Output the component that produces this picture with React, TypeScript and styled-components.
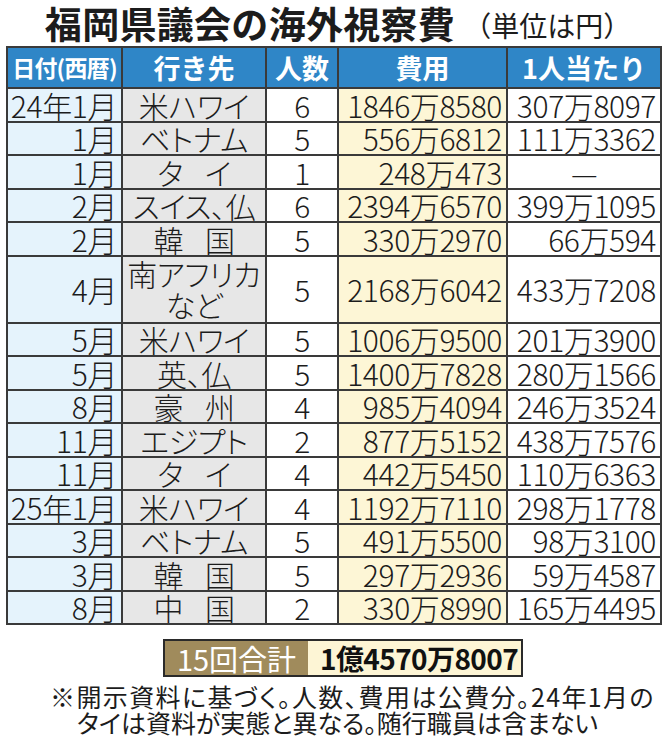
import React from "react";
import styled, { createGlobalStyle } from "styled-components";

const Global = createGlobalStyle`
  html, body { margin: 0; padding: 0; background: #ffffff; }
  body {
    font-family: "Noto Sans CJK JP", "Noto Sans", sans-serif;
    color: #1c1c1c;
  }
`;

const Page = styled.div`
  width: 670px;
  height: 745px;
  overflow: hidden;
  display: flex;
  flex-direction: column;
`;

const TitleRow = styled.div`
  height: 46px;
  display: flex;
  align-items: center;
  justify-content: center;
  gap: 8px;
  padding-left: 6px;
  box-sizing: border-box;
`;

const Title = styled.span`
  font-size: 37px;
  font-weight: 700;
  line-height: 1.15;
  letter-spacing: 0.3px;
  white-space: nowrap;
`;

const Unit = styled.span`
  font-size: 28px;
  font-weight: 400;
  line-height: 1.15;
  margin-top: 5px;
  white-space: nowrap;
`;

const Table = styled.div`
  display: grid;
  grid-template-columns: 113px 142px 70px 167px 152px;
  grid-template-rows: 39px;
  grid-auto-rows: 31.5px;
  gap: 2px;
  background: #3a3a3a;
  border: 2px solid #3a3a3a;
  width: fit-content;
  margin-left: 6px;
`;

const HeadCell = styled.div<{ $narrow?: boolean }>`
  background: #2f86c7;
  color: #ffffff;
  font-weight: 700;
  font-size: ${(p) => (p.$narrow ? "23px" : "27px")};
  letter-spacing: ${(p) => (p.$narrow ? "-0.8px" : "0")};
  display: flex;
  align-items: center;
  justify-content: center;
  line-height: 1;
  white-space: nowrap;
`;

type Align = "left" | "center" | "right";

const Cell = styled.div<{ $bg: string; $align: Align; $tall?: boolean; $gap?: number }>`
  background: ${(p) => p.$bg};
  grid-row: ${(p) => (p.$tall ? "span 2" : "auto")};
  display: flex;
  align-items: center;
  justify-content: ${(p) =>
    p.$align === "right" ? "flex-end" : p.$align === "center" ? "center" : "flex-start"};
  gap: ${(p) => p.$gap ?? 0}px;
  padding: 0 4px;
  font-size: 30px;
  font-weight: 300;
  line-height: 1;
  white-space: nowrap;
  letter-spacing: -0.4px;
  font-feature-settings: "palt";
`;

const TwoLine = styled.div`
  display: flex;
  flex-direction: column;
  align-items: center;
  line-height: 31px;
`;

const TotalBox = styled.div`
  margin-top: 14px;
  margin-left: 163px;
  width: 360px;
  height: 38px;
  box-sizing: border-box;
  border: 2px solid #2a2a2a;
  display: flex;
`;

const TotalLabel = styled.div`
  width: 143px;
  background: #a08b5c;
  color: #ffffff;
  font-size: 29px;
  font-weight: 400;
  display: flex;
  align-items: center;
  justify-content: center;
  line-height: 1;
  white-space: nowrap;
`;

const TotalValue = styled.div`
  flex: 1;
  background: #fdf5d5;
  color: #111;
  font-size: 28px;
  font-weight: 700;
  display: flex;
  align-items: center;
  padding-left: 12px;
  line-height: 1;
  letter-spacing: -0.6px;
  white-space: nowrap;
`;

const Note = styled.div`
  margin-top: 6px;
  padding-left: 77px;
  font-size: 25px;
  line-height: 26px;
  font-feature-settings: "palt";
  color: #1c1c1c;
  white-space: nowrap;
`;

const NoteLine = styled.div<{ $hang?: boolean; $spread: number }>`
  margin-left: ${(p) => (p.$hang ? "-27px" : "0")};
  letter-spacing: ${(p) => p.$spread}px;
`;

type Row = {
  date: string;
  dest: string | string[];
  tall?: boolean;
  n: string;
  cost: string;
  per: string;
};

const rows: Row[] = [
  { date: "24年1月", dest: "米ハワイ", n: "6", cost: "1846万8580", per: "307万8097" },
  { date: "1月", dest: "ベトナム", n: "5", cost: "556万6812", per: "111万3362" },
  { date: "1月", dest: ["タ", "イ"], n: "1", cost: "248万473", per: "—" },
  { date: "2月", dest: "スイス、仏", n: "6", cost: "2394万6570", per: "399万1095" },
  { date: "2月", dest: ["韓", "国"], n: "5", cost: "330万2970", per: "66万594" },
  { date: "4月", dest: "南アフリカ|など", tall: true, n: "5", cost: "2168万6042", per: "433万7208" },
  { date: "5月", dest: "米ハワイ", n: "5", cost: "1006万9500", per: "201万3900" },
  { date: "5月", dest: "英、仏", n: "5", cost: "1400万7828", per: "280万1566" },
  { date: "8月", dest: ["豪", "州"], n: "4", cost: "985万4094", per: "246万3524" },
  { date: "11月", dest: "エジプト", n: "2", cost: "877万5152", per: "438万7576" },
  { date: "11月", dest: ["タ", "イ"], n: "4", cost: "442万5450", per: "110万6363" },
  { date: "25年1月", dest: "米ハワイ", n: "4", cost: "1192万7110", per: "298万1778" },
  { date: "3月", dest: "ベトナム", n: "5", cost: "491万5500", per: "98万3100" },
  { date: "3月", dest: ["韓", "国"], n: "5", cost: "297万2936", per: "59万4587" },
  { date: "8月", dest: ["中", "国"], n: "2", cost: "330万8990", per: "165万4495" },
];

const C1 = "#e5f3fc";
const C2 = "#e7e7e7";
const C3 = "#ffffff";
const C4 = "#fdf6d6";
const C5 = "#ffffff";

function DestCell({ row }: { row: Row }) {
  if (Array.isArray(row.dest)) {
    return (
      <Cell $bg={C2} $align="center" $gap={22} $tall={row.tall}>
        {row.dest.map((c, i) => (
          <span key={i}>{c}</span>
        ))}
      </Cell>
    );
  }
  if (row.dest.includes("|")) {
    const [a, b] = row.dest.split("|");
    return (
      <Cell $bg={C2} $align="center" $tall={row.tall}>
        <TwoLine>
          <span>{a}</span>
          <span>{b}</span>
        </TwoLine>
      </Cell>
    );
  }
  return (
    <Cell $bg={C2} $align="center" $tall={row.tall}>
      {row.dest}
    </Cell>
  );
}

export default function App() {
  return (
    <>
      <Global />
      <Page>
        <TitleRow>
          <Title>福岡県議会の海外視察費</Title>
          <Unit>（単位は円）</Unit>
        </TitleRow>
        <Table>
          <HeadCell $narrow>日付(西暦)</HeadCell>
          <HeadCell>行き先</HeadCell>
          <HeadCell>人数</HeadCell>
          <HeadCell>費用</HeadCell>
          <HeadCell>1人当たり</HeadCell>
          {rows.map((r, i) => (
            <React.Fragment key={i}>
              <Cell $bg={C1} $align="right" $tall={r.tall}>{r.date}</Cell>
              <DestCell row={r} />
              <Cell $bg={C3} $align="center" $tall={r.tall}>{r.n}</Cell>
              <Cell $bg={C4} $align="right" $tall={r.tall}>{r.cost}</Cell>
              <Cell $bg={C5} $align={r.per === "—" ? "center" : "right"} $tall={r.tall}>
                {r.per}
              </Cell>
            </React.Fragment>
          ))}
        </Table>
        <TotalBox>
          <TotalLabel>15回合計</TotalLabel>
          <TotalValue>1億4570万8007</TotalValue>
        </TotalBox>
        <Note>
          <NoteLine $hang $spread={1.4}>※開示資料に基づく。人数、費用は公費分。24年1月の</NoteLine>
          <NoteLine $spread={0}>タイは資料が実態と異なる。随行職員は含まない</NoteLine>
        </Note>
      </Page>
    </>
  );
}
